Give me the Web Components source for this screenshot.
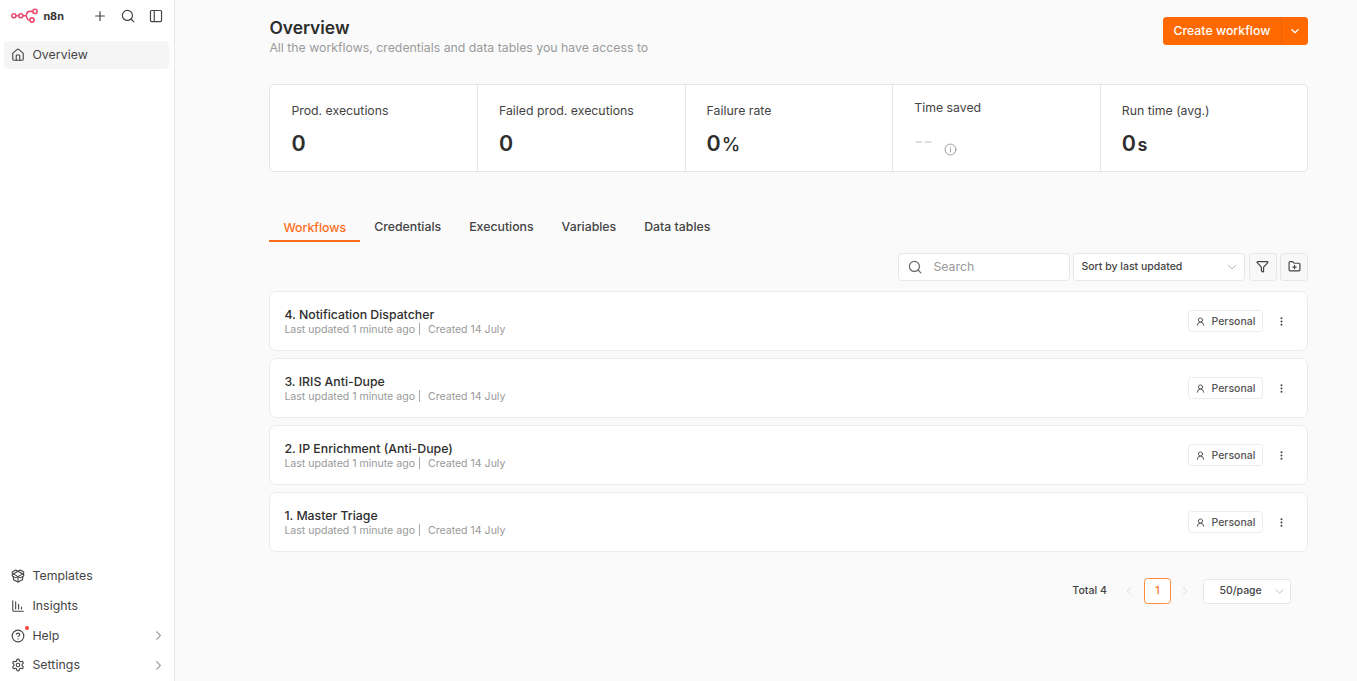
<!DOCTYPE html>
<html lang="en">
<head>
<meta charset="utf-8">
<title>Overview - n8n</title>
<style>
html,body{margin:0;height:100%}
body{font-family:Inter,"Liberation Sans",sans-serif;background:#fafafa;color:#444;overflow:hidden}
</style>
</head>
<body>
<n8n-app></n8n-app>
<script>
const define = (name, css, render) => customElements.define(name, class extends HTMLElement {
  connectedCallback() {
    if (this.shadowRoot) return;
    this.attachShadow({ mode: 'open' }).innerHTML =
      `<style>*{box-sizing:border-box}:host{box-sizing:border-box}${css}</style>${render(this)}`;
  }
});

const ICONS = {
  plus: '<path d="M4.5 12h15M12 4.5v15"/>',
  search: '<circle cx="11" cy="11" r="8.6"/><path d="m22 22-4.8-4.8"/>',
  panel: '<rect x="2.5" y="2.5" width="19" height="19" rx="2"/><path d="M9 3v18"/>',
  house: '<path d="M15 21v-8a1 1 0 0 0-1-1h-4a1 1 0 0 0-1 1v8"/><path d="M3 10a2 2 0 0 1 .709-1.528l7-5.999a2 2 0 0 1 2.582 0l7 5.999A2 2 0 0 1 21 10v9a2 2 0 0 1-2 2H5a2 2 0 0 1-2-2z"/>',
  box: '<path d="M12 22v-9"/><path d="M15.17 2.21a1.67 1.67 0 0 1 1.63 0L21 4.57a1.93 1.93 0 0 1 0 3.36L8.82 14.79a1.655 1.655 0 0 1-1.64 0L3 12.43a1.93 1.93 0 0 1 0-3.36z"/><path d="M20 13v3.87a2.06 2.06 0 0 1-1.11 1.83l-6 3.08a1.93 1.93 0 0 1-1.78 0l-6-3.08A2.06 2.06 0 0 1 4 16.87V13"/><path d="M21 12.43a1.93 1.93 0 0 0 0-3.36L8.83 2.2a1.64 1.64 0 0 0-1.63 0L3 4.57a1.93 1.93 0 0 0 0 3.36l12.18 6.86a1.636 1.636 0 0 0 1.63 0z"/>',
  chart: '<path d="M13 17V9M18 17v-3M8 17V5M3 3v16a2 2 0 0 0 2 2h16"/>',
  help: '<circle cx="12" cy="12" r="10"/><path d="M9.09 9a3 3 0 0 1 5.83 1c0 2-3 3-3 3M12 17h.01"/>',
  gear: '<path d="M12.22 2h-.44a2 2 0 0 0-2 2v.18a2 2 0 0 1-1 1.73l-.43.25a2 2 0 0 1-2 0l-.15-.08a2 2 0 0 0-2.73.73l-.22.38a2 2 0 0 0 .73 2.73l.15.1a2 2 0 0 1 1 1.72v.51a2 2 0 0 1-1 1.74l-.15.09a2 2 0 0 0-.73 2.73l.22.38a2 2 0 0 0 2.73.73l.15-.08a2 2 0 0 1 2 0l.43.25a2 2 0 0 1 1 1.73V20a2 2 0 0 0 2 2h.44a2 2 0 0 0 2-2v-.18a2 2 0 0 1 1-1.73l.43-.25a2 2 0 0 1 2 0l.15.08a2 2 0 0 0 2.73-.73l.22-.39a2 2 0 0 0-.73-2.73l-.15-.08a2 2 0 0 1-1-1.74v-.5a2 2 0 0 1 1-1.74l.15-.09a2 2 0 0 0 .73-2.73l-.22-.38a2 2 0 0 0-2.73-.73l-.15.08a2 2 0 0 1-2 0l-.43-.25a2 2 0 0 1-1-1.73V4a2 2 0 0 0-2-2z"/><circle cx="12" cy="12" r="3"/>',
  right: '<path d="m8.5 19 7-7-7-7"/>',
  left: '<path d="m15.5 19-7-7 7-7"/>',
  down: '<path d="m5.5 9 6.5 6.5L18.5 9"/>',
  wide: '<path d="m2.5 7.5 9.5 9 9.5-9"/>',
  info: '<circle cx="12" cy="12" r="10"/><path d="M12 16.5v-5.5M12 7.5h.01"/>',
  funnel: '<path d="M10 20a1 1 0 0 0 .553.895l2 1A1 1 0 0 0 14 21v-7a2 2 0 0 1 .517-1.341L21.74 4.67A1 1 0 0 0 21 3H3a1 1 0 0 0-.742 1.67l7.225 7.989A2 2 0 0 1 10 14z"/>',
  folder: '<path d="M12 10v6M9 13h6M20 20a2 2 0 0 0 2-2V8a2 2 0 0 0-2-2h-7.9a2 2 0 0 1-1.69-.9L9.6 3.9A2 2 0 0 0 7.93 3H4a2 2 0 0 0-2 2v13a2 2 0 0 0 2 2Z"/>',
  user: '<circle cx="12" cy="8" r="5.5"/><path d="M20.5 22a8.5 8.5 0 0 0-17 0"/>',
  dots: '<g fill="currentColor" stroke="none"><circle cx="12" cy="3.5" r="2.7"/><circle cx="12" cy="12" r="2.7"/><circle cx="12" cy="20.5" r="2.7"/></g>'
};
define('ui-icon', `:host{display:inline-flex;flex:none}svg{display:block;fill:none;stroke:currentColor;stroke-linecap:round;stroke-linejoin:round}`,
  el => { const s = el.getAttribute('size') || 14;
    return `<svg width="${s}" height="${s}" viewBox="0 0 24 24" stroke-width="${el.getAttribute('weight') || 2}">${ICONS[el.getAttribute('name')]}</svg>`; });

define('n8n-logo', `:host{display:flex;align-items:center;gap:4px;font-size:10.8px;font-weight:700;color:#333;line-height:15px}svg{display:block}`,
  () => `<svg width="28" height="16" viewBox="0 0 28 16" fill="none" stroke="#ea4b71" stroke-width="1.6"><circle cx="2.9" cy="7.7" r="2"/><circle cx="9.9" cy="7.7" r="2"/><circle cx="24" cy="3.4" r="2.1"/><circle cx="21" cy="12" r="2.1"/><path d="M12 7.7h2.2c1.2 0 1.5-.9 1.7-2.1.3-1.5.9-2.2 2.4-2.2h3.6M5 7.7h3M14.2 7.7c1.2 0 1.5.9 1.8 2.3.2 1.3.9 2 2 2h.9"/></svg><span>n8n</span>`);

define('nav-item', `:host{display:flex;align-items:center;height:29.7px;padding:0 4px 0 7px;border-radius:4px;font-size:12.3px;letter-spacing:.06px;line-height:18px;color:#444}
:host([active]){background:#f5f5f5;height:28px}
.i{position:relative;display:flex;margin-right:7px}
.dot{position:absolute;width:4px;height:4px;border-radius:50%;background:#ff4040;right:-4px;top:-3px}
.t{flex:1}.c{color:#999;display:flex}`,
  el => `<span class="i"><ui-icon name="${el.getAttribute('icon')}" size="14" weight="1.9"></ui-icon>${el.hasAttribute('badge') ? '<i class="dot"></i>' : ''}</span><span class="t"><slot></slot></span>${el.hasAttribute('expand') ? '<ui-icon class="c" name="right" size="13" weight="2"></ui-icon>' : ''}`);

define('app-sidebar', `:host{display:flex;flex-direction:column;width:175px;flex:none;background:#fff;border-right:1px solid #e8e8e8;padding:0 5px 0 4.4px}
header{display:flex;align-items:center;height:32px;padding:0 6px 0 7px;margin-bottom:9px;color:#444}
n8n-logo{flex:1}.a{display:flex;gap:13.8px}.s{flex:1}footer{display:block;padding-bottom:.9px}`,
  () => `<header><n8n-logo></n8n-logo><div class="a"><ui-icon name="plus"></ui-icon><ui-icon name="search"></ui-icon><ui-icon name="panel"></ui-icon></div></header>
<nav-item icon="house" active>Overview</nav-item><div class="s"></div>
<footer><nav-item icon="box">Templates</nav-item><nav-item icon="chart">Insights</nav-item><nav-item icon="help" badge expand>Help</nav-item><nav-item icon="gear" expand>Settings</nav-item></footer>`);

define('create-button', `:host{display:flex;height:28px;width:145.5px;border-radius:3.5px;background:#ff6900;color:#fff;font-size:12.3px;font-weight:500;line-height:28px}
b{font-weight:500;width:118px;text-align:center}span{flex:1;display:flex;align-items:center;justify-content:center;border-left:1px solid #e06412}`,
  () => `<b><slot></slot></b><span><ui-icon name="down" size="12" weight="2.3"></ui-icon></span>`);

define('page-header', `:host{display:flex;justify-content:space-between;height:67px}
h1{margin:0;font-size:17.4px;line-height:22px;font-weight:600;color:#2e2e2e}p{margin:0;font-size:12.3px;line-height:17px;color:#9a9a9a}`,
  () => `<div><h1>Overview</h1><p>All the workflows, credentials and data tables you have access to</p></div><create-button>Create workflow</create-button>`);

define('stat-cell', `:host{display:block;flex:1;padding:17px 0 0 21px;border-left:1px solid #e6e6e6}
:host(:first-of-type){border-left:0}
.l{font-size:12.3px;line-height:18px;color:#444}.v{display:flex;align-items:baseline;margin-top:8.5px;font-size:21.5px;line-height:28px;font-weight:600;color:#2e2e2e}
.u{font-size:18px;margin-left:1.5px}.u.p{font-weight:500;font-size:18.7px;margin-left:1px}.n{font-weight:500;color:#ddd;font-size:20px}
:host([muted]){padding-top:14px}:host([muted]) .v{margin-top:9.5px}.i{color:#999;margin-left:11px;align-self:flex-end;transform:translateY(1px)}`,
  el => { const u = el.getAttribute('unit') || ''; return el.hasAttribute('muted')
    ? `<div class="l"><slot></slot></div><div class="v"><span class="n">--</span><ui-icon class="i" name="info" size="13" weight="1.8"></ui-icon></div>`
    : `<div class="l"><slot></slot></div><div class="v">0<span class="u ${u === '%' ? 'p' : ''}">${u}</span></div>`; });

define('stat-bar', `:host{display:flex;height:88px;border:1px solid #e6e6e6;border-radius:5px;background:#fff}`,
  () => `<stat-cell>Prod. executions</stat-cell><stat-cell>Failed prod. executions</stat-cell><stat-cell unit="%">Failure rate</stat-cell><stat-cell muted>Time saved</stat-cell><stat-cell unit="s">Run time (avg.)</stat-cell>`);

define('tab-item', `:host{display:block;padding:5px 14px 0;height:29px;font-size:12.3px;line-height:17px;font-weight:500;color:#444}
:host([active]){padding-top:6px;color:#ff6d1a;border-bottom:2px solid #ff6d1a}`, () => `<slot></slot>`);
define('tab-bar', `:host{display:flex;height:29px;margin-top:41px}`,
  () => `<tab-item active>Workflows</tab-item><tab-item>Credentials</tab-item><tab-item>Executions</tab-item><tab-item>Variables</tab-item><tab-item>Data tables</tab-item>`);

define('tool-bar', `:host{display:flex;justify-content:flex-end;gap:3.5px;margin-top:11px;height:28px}
div{display:flex;align-items:center;border:1px solid #e6e6e6;border-radius:3.5px;background:#fff;line-height:16px;padding-bottom:1px}
.q{width:172px;padding-left:9.5px;gap:11px;font-size:12.3px;color:#999}.q ui-icon{color:#666}
.s{width:172px;padding:0 7px 0 7px;justify-content:space-between;font-size:10.5px;font-weight:500;color:#444}.s ui-icon{color:#aaa}
.b{width:28px;justify-content:center;background:#f8f8f8;color:#444}`,
  () => `<div class="q"><ui-icon name="search" size="14"></ui-icon><span>Search</span></div><div class="s"><span>Sort by last updated</span><ui-icon name="wide" size="10" weight="2"></ui-icon></div><div class="b"><ui-icon name="funnel" size="13" weight="2.2"></ui-icon></div><div class="b"><ui-icon name="folder" size="13" weight="2.2"></ui-icon></div>`);

define('owner-badge', `:host{display:flex;align-items:center;justify-content:center;width:75px;height:22px;gap:6px;border:1px solid #ebebeb;border-radius:3.5px;font-size:10.5px;font-weight:500;color:#555}`,
  () => `<ui-icon name="user" size="9" weight="2.6"></ui-icon><span><slot></slot></span>`);

define('workflow-card', `:host{display:flex;align-items:center;height:60px;border:1px solid #ebebeb;border-radius:7px;background:#fff;padding:0 21px 0 14px}
.m{flex:1}h2{margin:1px 0 0;font-size:12.3px;line-height:15px;font-weight:500;color:#2e2e2e}p{display:flex;margin:0;font-size:10.55px;line-height:15px;color:#999}
.sep{width:1px;height:12px;background:#aaa;margin:1px 8px 0 4px}.d{margin-left:14px;color:#444}`,
  () => `<div class="m"><h2><slot></slot></h2><p><span>Last updated 1 minute ago</span><span class="sep"></span><span>Created 14 July</span></p></div><owner-badge>Personal</owner-badge><ui-icon class="d" name="dots" size="9"></ui-icon>`);

define('workflow-list', `:host{display:flex;flex-direction:column;gap:7px;margin-top:10px}`,
  () => ['4. Notification Dispatcher', '3. IRIS Anti-Dupe', '2. IP Enrichment (Anti-Dupe)', '1. Master Triage'].map(t => `<workflow-card>${t}</workflow-card>`).join(''));

define('page-nav', `:host{display:flex;justify-content:flex-end;align-items:center;margin-top:26px;height:26px;padding-right:17px;font-size:10.5px;line-height:16px;color:#444;font-weight:500}
.n{color:#ddd}.c{width:27px;height:26px;margin:0 8.5px 0 9px;border:1.5px solid #ff8a3d;border-radius:3.5px;background:#fff;color:#ff6d1a;display:flex;align-items:center;justify-content:center}
.t{font-size:10.6px;margin-right:16px}.s{display:flex;align-items:center;justify-content:space-between;width:88px;height:25px;border:1px solid #e6e6e6;border-radius:3.5px;background:#fff;padding:0 6px 0 15px;margin-left:12px}.s ui-icon{color:#aaa}`,
  () => `<span class="t">Total 4</span><ui-icon class="n" name="left" size="12"></ui-icon><span class="c">1</span><ui-icon class="n" name="right" size="12"></ui-icon><div class="s"><span>50/page</span><ui-icon name="wide" size="9" weight="2"></ui-icon></div>`);

define('n8n-app', `:host{display:flex;height:681px;width:1357px}main{flex:1;padding:17px 48.6px 0 94.4px;min-width:0}`,
  () => `<app-sidebar></app-sidebar><main><page-header></page-header><stat-bar></stat-bar><tab-bar></tab-bar><tool-bar></tool-bar><workflow-list></workflow-list><page-nav></page-nav></main>`);
</script>
</body>
</html>
